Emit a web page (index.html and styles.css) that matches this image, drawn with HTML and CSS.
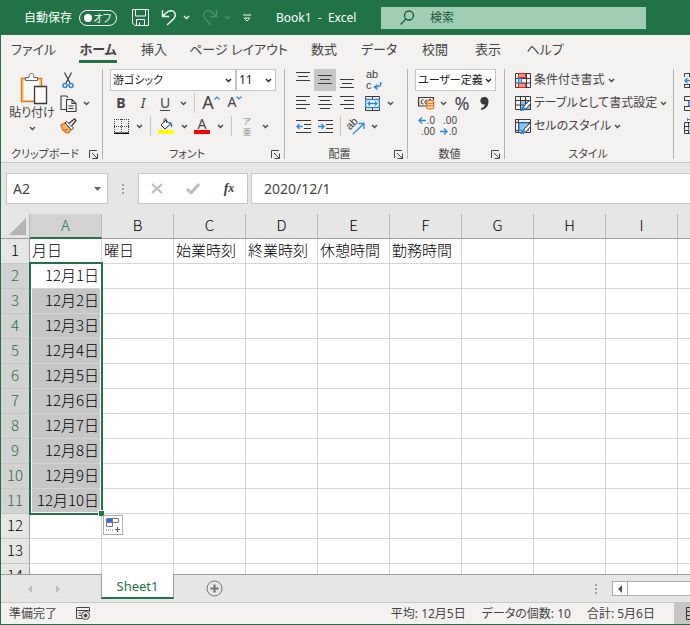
FILE: index.html
```
<!DOCTYPE html>
<html lang="ja">
<head>
    <meta charset="UTF-8">
    <title>Book1 - Excel</title>
    <link rel="stylesheet" href="styles.css">
</head>
<body>

    <svg class="defs" aria-hidden="true">
        <symbol id="chev" viewBox="0 0 7 5"><path d="M1 1l2.500 2.500L6 1" fill="none" stroke="currentColor" stroke-width="1.300"/></symbol>
        <symbol id="launch" viewBox="0 0 9 9"><path d="M.5 8V.5H8M3 3l5 5M8.500 3.500v5h-5" fill="none" stroke="currentColor"/></symbol>
    </svg>

    <header class="titlebar">
        <label class="autosave">自動保存
            <input type="checkbox" class="autosave__input">
            <span class="autosave__switch">オフ</span>
        </label>
        <div class="quick">
            <button class="quick__btn" aria-label="上書き保存">
                <svg width="17" height="17" viewBox="0 0 17 17" fill="none" stroke="#fff"><path d="M.5.5h16v16H3L.5 14zM3.500.5v6.500h10V.5M4.500 16.500v-6h8v6M7.500 16v-2.500"/></svg>
            </button>
            <button class="quick__btn quick__btn--wide" aria-label="元に戻す">
                <svg width="16" height="17" viewBox="0 0 16 17" fill="none" stroke="#fff" stroke-width="1.400"><path d="M1.500 1v6.500H8M1.500 7.500L5 4c3-3 7-3 8.500-.5 1.500 2.500 1 4.500-1 6.500L6 16"/></svg>
                <svg class="chev"><use href="#chev"/></svg>
            </button>
            <button class="quick__btn quick__btn--wide quick__btn--off" aria-label="やり直し">
                <svg width="16" height="17" viewBox="0 0 16 17" fill="none" stroke="currentColor" stroke-width="1.400"><path d="M14.500 1v6.500H8M14.500 7.500L11 4C8 1 4 1 2.500 3.500 1 6 1.500 8 3.500 10L9 16"/></svg>
                <svg class="chev"><use href="#chev"/></svg>
            </button>
            <button class="quick__btn" aria-label="カスタマイズ">
                <svg width="8" height="8" viewBox="0 0 8 8"><path d="M0 1h8" stroke="#fff"/><path d="M1 4h6L4 7z" fill="none" stroke="#fff"/></svg>
            </button>
        </div>
        <span class="titlebar__name">Book1&nbsp; -&nbsp; Excel</span>
        <label class="search">
            <svg width="15" height="15" viewBox="0 0 15 15" fill="none" stroke="#185c37" stroke-width="1.300"><circle cx="9" cy="5.500" r="4.500"/><path d="M6 9l-5.500 5.500"/></svg>
            <input type="text" class="search__input" placeholder="検索" aria-label="検索">
        </label>
    </header>

    <nav class="tabs">
        <a href="#">ファイル</a>
        <a href="#" class="is-active">ホーム</a>
        <a href="#">挿入</a>
        <a href="#">ページ レイアウト</a>
        <a href="#">数式</a>
        <a href="#">データ</a>
        <a href="#">校閲</a>
        <a href="#">表示</a>
        <a href="#">ヘルプ</a>
    </nav>

    <div class="ribbon">
        <section class="group group--clip">
            <div class="group__body group__body--clip">
                <button class="paste">
                    <svg width="28" height="32" viewBox="0 0 28 32"><path d="M1.500 5.500h20v23h-20z" fill="#f8d98c" stroke="#e07a1c" stroke-width="1.500"/><path d="M4 7h15v20H4z" fill="#fafafa"/><path d="M5.500 7.500v-3H9C9 1.500 10 .5 11.500.5S14 1.500 14 4.500h3.500v3z" fill="#fafafa" stroke="#666"/><path d="M14.500 13.500h12v17h-12z" fill="#fafafa" stroke="#3b3a39" stroke-width="1.300"/></svg>
                    <span>貼り付け</span>
                    <svg class="chev"><use href="#chev"/></svg>
                </button>
                <div class="rows">
                    <div class="row">
                        <button class="tool" aria-label="切り取り">
                            <svg width="12" height="17" viewBox="0 0 12 17" fill="none" stroke="#3b3a39" stroke-width="1.200"><path d="M2.500.5L8 11M9.500.5L4 11"/><g stroke="#2b88d8" stroke-width="1.500"><circle cx="3" cy="13.500" r="2"/><circle cx="9" cy="13.500" r="2"/></g></svg>
                        </button>
                    </div>
                    <div class="row">
                        <button class="tool" aria-label="コピー">
                            <svg width="17" height="17" viewBox="0 0 17 17" fill="none" stroke="#3b3a39" stroke-width="1.100"><path d="M6 14.500H1V1h5.500l1.500 1.500M6.500 4.500h5.500l4 4v8H6.500zM12 4.500v4h4M8.500 11h5M8.500 13.500h5"/></svg>
                        </button>
                        <button class="drop" aria-label="コピーのオプション"><svg class="chev"><use href="#chev"/></svg></button>
                    </div>
                    <div class="row">
                        <button class="tool" aria-label="書式のコピー">
                            <svg width="17" height="16" viewBox="0 0 17 16"><path d="M1 7l5-2.500 6 6L8.500 15 5 14l1.500-2L3 12.500z" fill="#f6b26b" stroke="#e07a1c" stroke-width="1.500"/><path d="M5 5l2-1.500 6.500 6.500-2 2z" fill="#fff" stroke="#3b3a39"/><path d="M9 5.500L14.500.8 16 2.500 11.500 8" fill="#fff" stroke="#3b3a39" stroke-width="1.300"/></svg>
                        </button>
                    </div>
                </div>
            </div>
            <div class="group__label">クリップボード<button class="launch" aria-label="クリップボードの設定"><svg><use href="#launch"/></svg></button></div>
        </section>

        <section class="group group--font">
            <div class="group__body rows">
                <div class="row">
                    <span class="combo combo--font"><select aria-label="フォント"><option>游ゴシック</option></select><svg class="chev"><use href="#chev"/></svg></span>
                    <span class="combo combo--size"><select aria-label="フォント サイズ"><option>11</option></select><svg class="chev"><use href="#chev"/></svg></span>
                </div>
                <div class="row">
                    <button class="tool tool--bold">B</button>
                    <button class="tool tool--italic">I</button>
                    <button class="tool tool--under">U</button>
                    <button class="drop" aria-label="下線の種類"><svg class="chev"><use href="#chev"/></svg></button>
                    <i class="split"></i>
                    <button class="tool tool--grow" aria-label="フォント サイズの拡大">A<svg width="6" height="4" viewBox="0 0 6 4"><path d="M.5 3.500L3 1l2.500 2.500" fill="none" stroke="#2b88d8" stroke-width="1.200"/></svg></button>
                    <button class="tool tool--shrink" aria-label="フォント サイズの縮小">A<svg width="6" height="4" viewBox="0 0 6 4"><path d="M.5.5L3 3 5.500.5" fill="none" stroke="#2b88d8" stroke-width="1.200"/></svg></button>
                </div>
                <div class="row">
                    <button class="tool" aria-label="罫線">
                        <svg width="15" height="15" viewBox="0 0 15 15" stroke="#3b3a39"><path d="M.5 0v13M7.500 0v13M14.500 0v13M0 .5h15M0 7.500h15" stroke-dasharray="1 1"/><path d="M0 14.500h15" stroke="#000" stroke-width="2"/></svg>
                    </button>
                    <button class="drop" aria-label="罫線の種類"><svg class="chev"><use href="#chev"/></svg></button>
                    <i class="split"></i>
                    <button class="tool" aria-label="塗りつぶしの色">
                        <svg width="16" height="16" viewBox="0 0 16 16"><path d="M3 7l5-5 4 4.500-5 4.500z" fill="#fff" stroke="#3b3a39"/><path d="M6 5V1.500Q7-.5 8.500 1.500V5" fill="none" stroke="#3b3a39"/><path d="M11 3.500q4 .5 3 6-2-1-1.500-3.500z" fill="#1f6fb5"/><path d="M0 12h16v4H0z" fill="#ff0"/></svg>
                    </button>
                    <button class="drop" aria-label="その他の塗りつぶし"><svg class="chev"><use href="#chev"/></svg></button>
                    <button class="tool tool--color">A</button>
                    <button class="drop" aria-label="その他のフォントの色"><svg class="chev"><use href="#chev"/></svg></button>
                    <i class="split"></i>
                    <button class="tool tool--ruby"><span>ア</span><span>亜</span></button>
                    <button class="drop" aria-label="ふりがなの設定"><svg class="chev"><use href="#chev"/></svg></button>
                </div>
            </div>
            <div class="group__label">フォント<button class="launch" aria-label="フォントの設定"><svg><use href="#launch"/></svg></button></div>
        </section>

        <section class="group group--align">
            <div class="group__body rows">
                <div class="row">
                    <button class="tool" aria-label="上揃え"><svg width="14" height="16" stroke="#3b3a39"><path d="M0 .5h14M2 4.500h10M0 8.500h14"/></svg></button>
                    <button class="tool is-pressed" aria-label="上下中央揃え"><svg width="14" height="16" stroke="#3b3a39"><path d="M0 3.500h14M2 7.500h10M0 11.500h14"/></svg></button>
                    <button class="tool" aria-label="下揃え"><svg width="14" height="16" stroke="#3b3a39"><path d="M0 7.500h14M2 11.500h10M0 15.500h14"/></svg></button>
                    <button class="tool tool--wrap" aria-label="折り返して全体を表示する">
                        <span>ab</span>
                        <span class="tool__line">c<svg width="9" height="8" viewBox="0 0 9 8" fill="none" stroke="#2b88d8" stroke-width="1.500"><path d="M7.500 0Q9 5 2 5M4.500 2.500L1.500 5l3 2.500"/></svg></span>
                    </button>
                </div>
                <div class="row">
                    <button class="tool" aria-label="左揃え"><svg width="14" height="14" stroke="#3b3a39"><path d="M0 .5h14M0 4.500h10M0 8.500h14M0 12.500h10"/></svg></button>
                    <button class="tool" aria-label="中央揃え"><svg width="14" height="14" stroke="#3b3a39"><path d="M0 .5h14M2 4.500h10M0 8.500h14M2 12.500h10"/></svg></button>
                    <button class="tool" aria-label="右揃え"><svg width="14" height="14" stroke="#3b3a39"><path d="M0 .5h14M4 4.500h10M0 8.500h14M4 12.500h10"/></svg></button>
                    <button class="tool tool--merge" aria-label="セルを結合して中央揃え">
                        <svg width="15" height="15" viewBox="0 0 15 15" fill="none"><path d="M.5.5h14v14H.5zM7.500.5v3M7.500 11.500v3" stroke="#3b3a39"/><path d="M.7 3.500h13.600v8H.7z" fill="#fff" stroke="#2b88d8" stroke-width="1.400"/><path d="M3 7.500h9M5 5.500l-2 2 2 2M10 5.500l2 2-2 2" stroke="#2b88d8" stroke-width="1.300"/></svg>
                    </button>
                    <button class="drop" aria-label="結合の種類"><svg class="chev"><use href="#chev"/></svg></button>
                </div>
                <div class="row">
                    <button class="tool" aria-label="インデントを減らす"><svg width="15" height="13" fill="none" stroke="#3b3a39"><path d="M0 .5h15M8 4.500h7M8 8.500h7M0 12.500h15"/><path d="M6.500 6.500H1M3.500 4L1 6.500 3.500 9" stroke="#2b88d8" stroke-width="1.300"/></svg></button>
                    <button class="tool" aria-label="インデントを増やす"><svg width="15" height="13" fill="none" stroke="#3b3a39"><path d="M0 .5h15M8 4.500h7M8 8.500h7M0 12.500h15"/><path d="M0 6.500h6M3.500 4L6 6.500 3.500 9" stroke="#2b88d8" stroke-width="1.300"/></svg></button>
                    <i class="split"></i>
                    <button class="tool tool--orient" aria-label="方向">
                        <svg width="17" height="17" viewBox="0 0 17 17" fill="none"><text x="0" y="10" font-size="11" fill="#3b3a39" transform="rotate(-45 4 9)">ab</text><path d="M5 16L15.500 6M10.500 5.500h5.500V11" stroke="#2b88d8" stroke-width="1.300"/></svg>
                    </button>
                    <button class="drop" aria-label="方向の種類"><svg class="chev"><use href="#chev"/></svg></button>
                </div>
            </div>
            <div class="group__label">配置<button class="launch" aria-label="配置の設定"><svg><use href="#launch"/></svg></button></div>
        </section>

        <section class="group group--number">
            <div class="group__body rows">
                <div class="row">
                    <span class="combo combo--format"><select aria-label="表示形式"><option>ユーザー定義</option></select><svg class="chev"><use href="#chev"/></svg></span>
                </div>
                <div class="row">
                    <button class="tool" aria-label="通貨表示形式">
                        <svg width="17" height="14" viewBox="0 0 17 14" fill="none"><path d="M8 10H.6V1.500h14.800V4" stroke="#3b3a39" stroke-width="1.200"/><path d="M5.500 3.500Q3 4 3 6t2.500 2M9 4Q7 4 7 6t1 2M11 3.500h2" stroke="#3b3a39"/><path d="M8.700 6v6q3.500 2 7 0V6" fill="#fbe3c8" stroke="#e07a1c" stroke-width="1.300"/><ellipse cx="12.200" cy="6" rx="3.500" ry="1.500" fill="#fff" stroke="#e07a1c" stroke-width="1.300"/><path d="M8.700 9q3.500 2 7 0" stroke="#e07a1c" stroke-width="1.300"/></svg>
                    </button>
                    <button class="drop drop--narrow" aria-label="通貨の種類"><svg class="chev"><use href="#chev"/></svg></button>
                    <button class="tool tool--percent">%</button>
                    <button class="tool" aria-label="桁区切りスタイル"><svg width="9" height="13" viewBox="0 0 9 13"><path d="M4 0a4 4 0 0 1 4.500 4.500C8.500 9 6 12 1 13V11.500Q4.500 10 5 7.500A3.800 3.800 0 1 1 4 0z" fill="#3b3a39"/></svg></button>
                </div>
                <div class="row">
                    <button class="tool tool--dec" aria-label="小数点以下の表示桁数を増やす">
                        <span class="tool__line"><svg width="8" height="7" fill="none" stroke="#2b88d8" stroke-width="1.300"><path d="M8 3.500H1M4 .5l-3 3 3 3"/></svg>.0</span>
                        <span>.00</span>
                    </button>
                    <button class="tool tool--dec" aria-label="小数点以下の表示桁数を減らす">
                        <span>.00</span>
                        <span class="tool__line"><svg width="8" height="7" fill="none" stroke="#2b88d8" stroke-width="1.300"><path d="M0 3.500h7M4 .5l3 3-3 3"/></svg>.0</span>
                    </button>
                </div>
            </div>
            <div class="group__label">数値<button class="launch" aria-label="表示形式の設定"><svg><use href="#launch"/></svg></button></div>
        </section>

        <section class="group group--style">
            <div class="group__body rows">
                <button class="row item">
                    <svg width="16" height="15" viewBox="0 0 16 15" fill="none"><path d="M.5.5h15v14H.5zM0 5.500h16M0 10h16M11.500 0v15" stroke="#3b3a39"/><path d="M3.500.5h7v4h-7zM3.500 10.500h7v4h-7z" fill="#f4918d" stroke="#d92b2b"/><path d="M3.500 5.500h3v4.500h-3z" fill="#8cc4f0" stroke="#2b88d8"/></svg>
                    条件付き書式<svg class="chev"><use href="#chev"/></svg>
                </button>
                <button class="row item">
                    <svg width="16" height="15" viewBox="0 0 16 15" fill="none"><path d="M5 5h10.500v9H5z" fill="#8cc4f0"/><path d="M.5.5h15v13H.5zM0 4.500h16M0 9h9M5.500 0v14M10.500 0v8" stroke="#3b3a39"/><path d="M15 4l-6 6-1 4 3-1 5-6z" fill="#fff" stroke="#3b3a39"/><path d="M8.500 10.500Q6 11 5 15q4 .5 6-2z" fill="#2b88d8"/></svg>
                    テーブルとして書式設定<svg class="chev"><use href="#chev"/></svg>
                </button>
                <button class="row item">
                    <svg width="16" height="15" viewBox="0 0 16 15" fill="none"><path d="M.5.5h15v13H.5zM0 3.500h16M3.500 0v14M0 11.500h6" stroke="#3b3a39"/><path d="M4 4h9.500v7.500H4z" fill="#8cc4f0" stroke="#2b88d8"/><path d="M15 4l-6 6-1 4 3-1 5-6z" fill="#fff" stroke="#3b3a39"/><path d="M8.500 10.500Q6 11 5 15q4 .5 6-2z" fill="#2b88d8"/></svg>
                    セルのスタイル<svg class="chev"><use href="#chev"/></svg>
                </button>
            </div>
            <div class="group__label">スタイル</div>
        </section>

        <section class="group group--cells">
            <div class="group__body rows">
                <button class="row item" aria-label="挿入"><svg width="16" height="15" viewBox="0 0 16 15" fill="none"><path d="M.5 4V.5h15v14H.5V11M5.500 0v4M5.500 11v4M0 11.500h16" stroke="#3b3a39"/><path d="M7 7.500H1M3.500 5L1 7.500 3.500 10" stroke="#2b88d8" stroke-width="1.300"/></svg></button>
                <button class="row item" aria-label="削除"><svg width="16" height="15" viewBox="0 0 16 15" fill="none"><path d="M.5 4V.5h15v14H.5V10M0 4.500h6M0 10.500h6" stroke="#3b3a39"/><path d="M4.500 5h9v5h-9z" fill="#8cc4f0" stroke="#2b88d8"/></svg></button>
                <button class="row item" aria-label="書式"><svg width="16" height="16" viewBox="0 0 16 16" fill="none"><path d="M.5 4.500h15v11H.5zM0 8.500h16M0 12.500h16M4.500 4v12" stroke="#3b3a39"/><path d="M3.500 0v3M3.500 1.500H14M4.500 8.500h8v4h-8z" stroke="#2b88d8"/></svg></button>
            </div>
        </section>
    </div>

    <div class="formula">
        <div class="namebox">
            <input type="text" value="A2" aria-label="名前ボックス">
            <button aria-label="名前の一覧"><svg width="7" height="4"><path d="M0 0h7L3.500 4z" fill="#666"/></svg></button>
        </div>
        <svg class="grip" width="2" height="12"><path d="M1 1v10" stroke="#a0a0a0" stroke-width="2" stroke-dasharray="2 2"/></svg>
        <div class="formula__btns">
            <button aria-label="キャンセル"><svg width="12" height="11"><path d="M1 1l10 9M11 1L1 10" stroke="#bcbcbc" stroke-width="2"/></svg></button>
            <button aria-label="入力"><svg width="14" height="11"><path d="M1 6l4 4 8-9" fill="none" stroke="#bcbcbc" stroke-width="3"/></svg></button>
            <button class="fx">f<small>x</small></button>
        </div>
        <input type="text" class="formula__input" value="2020/12/1" aria-label="数式バー">
    </div>

    <main class="sheet">
        <table>
            <thead>
                <tr><th class="corner"><svg width="17" height="17"><path d="M17 0v17H0z" fill="#b4b4b4"/></svg></th><th class="is-on">A</th><th>B</th><th>C</th><th>D</th><th>E</th><th>F</th><th>G</th><th>H</th><th>I</th><th></th></tr>
            </thead>
            <tbody>
                <tr><th>1</th><td>月日</td><td>曜日</td><td>始業時刻</td><td>終業時刻</td><td>休憩時間</td><td>勤務時間</td><td></td><td></td><td></td><td></td></tr>
                <tr class="is-on"><th>2</th><td class="is-first">12月1日<div class="selection"></div></td><td></td><td></td><td></td><td></td><td></td><td></td><td></td><td></td><td></td></tr>
                <tr class="is-on"><th>3</th><td>12月2日</td><td></td><td></td><td></td><td></td><td></td><td></td><td></td><td></td><td></td></tr>
                <tr class="is-on"><th>4</th><td>12月3日</td><td></td><td></td><td></td><td></td><td></td><td></td><td></td><td></td><td></td></tr>
                <tr class="is-on"><th>5</th><td>12月4日</td><td></td><td></td><td></td><td></td><td></td><td></td><td></td><td></td><td></td></tr>
                <tr class="is-on"><th>6</th><td>12月5日</td><td></td><td></td><td></td><td></td><td></td><td></td><td></td><td></td><td></td></tr>
                <tr class="is-on"><th>7</th><td>12月6日</td><td></td><td></td><td></td><td></td><td></td><td></td><td></td><td></td><td></td></tr>
                <tr class="is-on"><th>8</th><td>12月7日</td><td></td><td></td><td></td><td></td><td></td><td></td><td></td><td></td><td></td></tr>
                <tr class="is-on"><th>9</th><td>12月8日</td><td></td><td></td><td></td><td></td><td></td><td></td><td></td><td></td><td></td></tr>
                <tr class="is-on"><th>10</th><td>12月9日</td><td></td><td></td><td></td><td></td><td></td><td></td><td></td><td></td><td></td></tr>
                <tr class="is-on"><th>11</th><td>12月10日</td><td></td><td></td><td></td><td></td><td></td><td></td><td></td><td></td><td></td></tr>
                <tr><th>12</th><td></td><td class="has-fill"><button class="fill" aria-label="オートフィル オプション"><svg width="16" height="16" viewBox="0 0 16 16" fill="none" stroke="#777"><path d="M1.500 1.500h12v4h-12zM7.500 1.500v8h-6v-4"/><path d="M2 2h5v3H2z" fill="#2a6df5" stroke="none"/><path d="M1 13h7" stroke-dasharray="1 1"/><path d="M10 12.500h5M12.500 10v5" stroke="#555"/></svg></button></td><td></td><td></td><td></td><td></td><td></td><td></td><td></td><td></td></tr>
                <tr><th>13</th><td></td><td></td><td></td><td></td><td></td><td></td><td></td><td></td><td></td><td></td></tr>
                <tr><th>14</th><td></td><td></td><td></td><td></td><td></td><td></td><td></td><td></td><td></td><td></td></tr>
            </tbody>
        </table>
    </main>

    <div class="sheetbar">
        <div class="sheetbar__nav">
            <button aria-label="前のシート"><svg width="4" height="8"><path d="M4 0v8L0 4z" fill="#bbb"/></svg></button>
            <button aria-label="次のシート"><svg width="4" height="8"><path d="M0 0v8l4-4z" fill="#bbb"/></svg></button>
        </div>
        <button class="sheetbar__tab">Sheet1</button>
        <button class="sheetbar__add" aria-label="新しいシート"><svg width="17" height="17" fill="none" stroke="#707070"><circle cx="8.500" cy="8.500" r="7.500"/><path d="M4.500 8.500h8M8.500 4.500v8" stroke-width="2"/></svg></button>
        <svg class="grip" width="2" height="10"><path d="M1 0v10" stroke="#a0a0a0" stroke-width="2" stroke-dasharray="2 2"/></svg>
        <div class="scroll">
            <button aria-label="左へスクロール"><svg width="4" height="8"><path d="M4 0v8L0 4z" fill="#555"/></svg></button>
            <span class="scroll__thumb"></span>
        </div>
    </div>

    <footer class="status">
        <span>準備完了</span>
        <button aria-label="マクロの記録"><svg width="15" height="13" fill="none" stroke="#444"><path d="M6 11.500H.5V.5h13V5M.5 3.500h13M2.500 6h3M2.500 8.500h3" /><circle cx="9.500" cy="8.500" r="4"/><circle cx="9.500" cy="8.500" r="1.500" fill="#444"/></svg></button>
        <div class="status__sums">
            <span>平均: 12月5日</span>
            <span>データの個数: 10</span>
            <span>合計: 5月6日</span>
        </div>
        <button class="status__view" aria-label="標準"><svg width="15" height="13" fill="none" stroke="#333"><path d="M.5.5h14v12H.5zM0 4.500h15M0 8.500h15M5.500 0v13M10.500 0v13"/></svg></button>
    </footer>

</body>
</html>
```

FILE: styles.css
```
*,
*::before,
*::after {
  box-sizing: border-box;
}

:root {
  --green: #217346;
  --panel: #f3f2f1;
  --line: #c8c6c4;
  --ink: #444;
}

body {
  margin: 0;
  height: 100vh;
  display: flex;
  flex-direction: column;
  overflow: hidden;
  border-left: 1px solid var(--green);
  border-bottom: 1px solid var(--green);
  background-color: #e6e6e6;
  color: var(--ink);
  font-family: "Noto Sans", "Noto Sans CJK JP", sans-serif;
  font-size: 12px;
  line-height: 16px;
  font-feature-settings: "palt";
}

/* form items */

button,
input,
select {
  margin: 0;
  padding: 0;
  border: 0;
  border-radius: 0;
  background-color: transparent;
  color: inherit;
  font: inherit;
  font-feature-settings: inherit;
  appearance: none;
  outline: none;
}

button {
  display: flex;
  align-items: center;
  justify-content: center;
}

a {
  color: inherit;
  text-decoration: none;
}

svg {
  display: block;
  flex: none;
}

.defs {
  position: absolute;
  width: 0;
  height: 0;
}

.chev {
  width: 7px;
  height: 5px;
}

/* title bar */

.titlebar {
  flex: none;
  height: 35px;
  display: flex;
  align-items: center;
  padding-left: 23px;
  background-color: var(--green);
  color: #fff;
}

.autosave {
  display: flex;
  align-items: center;
  gap: 7px;
}

.autosave__input {
  position: absolute;
  opacity: 0;
}

.autosave__switch {
  display: flex;
  align-items: center;
  justify-content: space-between;
  width: 38px;
  height: 16px;
  padding: 0 5px 0 4px;
  border: 1px solid #fff;
  border-radius: 8px;
  font-size: 10px;
  line-height: 14px;
}

.autosave__switch::before {
  content: "";
  width: 8px;
  height: 8px;
  border-radius: 50%;
  background-color: #fff;
}

.quick {
  display: flex;
  align-items: center;
  gap: 12px;
  margin-left: 15px;
}

.quick__btn--wide {
  gap: 6px;
}

.quick__btn--off {
  color: #4c9069;
}

.titlebar__name {
  margin-left: 25px;
  width: 105px;
  white-space: nowrap;
}

.search {
  display: flex;
  align-items: center;
  gap: 15px;
  width: 265px;
  height: 22px;
  padding-left: 19px;
  background-color: #a0cdb4;
  color: #185c37;
}

.search__input {
  flex: 1;
  min-width: 0;
}

.search__input::placeholder {
  color: #185c37;
}

/* ribbon tabs */

.tabs {
  flex: none;
  display: grid;
  grid-template-columns: 65px 64px 48px 121px 50px 60px 52px 54px 60px;
  align-items: start;
  height: 29px;
  padding-top: 3px;
  background-color: var(--panel);
  font-size: 13px;
  line-height: 22px;
  text-align: center;
  white-space: nowrap;
}

.tabs .is-active {
  justify-self: center;
  border-bottom: 3px solid var(--green);
  font-weight: 700;
}

/* ribbon */

.ribbon {
  flex: none;
  display: flex;
  height: 99px;
  padding-top: 5px;
  overflow: hidden;
  border-bottom: 1px solid var(--line);
  background-color: var(--panel);
}

.group {
  flex: none;
  display: flex;
  flex-direction: column;
  justify-content: space-between;
  height: 90px;
  padding-left: 7px;
  border-right: 1px solid #b3b0ad;
}

.group--clip { width: 102px; }
.group--font { width: 182px; }
.group--align { width: 123px; }
.group--number { width: 97px; }
.group--style { width: 169px; }
.group--cells { border-right: 0; }

.group--style,
.group--cells {
  padding-left: 10px;
}

.group__body--clip {
  display: flex;
  gap: 1px;
}

.group__label {
  display: flex;
  justify-content: center;
  height: 14px;
  padding-right: 20px;
  position: relative;
  font-size: 11px;
  line-height: 18px;
  white-space: nowrap;
}

.group--style .group__label {
  padding-right: 12px;
}

.launch {
  position: absolute;
  right: 4px;
  bottom: 0;
}

.launch svg {
  width: 9px;
  height: 9px;
}

.paste {
  flex-direction: column;
  justify-content: flex-start;
  width: 48px;
  padding-top: 4px;
  white-space: nowrap;
}

.paste svg:first-child {
  margin-left: 4px;
}

.paste .chev {
  margin-top: 5px;
}

.rows {
  display: flex;
  flex-direction: column;
  gap: 1px;
}

.row {
  display: flex;
  align-items: center;
  height: 22px;
}

.tool {
  width: 22px;
  height: 22px;
  font-size: 14px;
}

.tool__line {
  display: flex;
  align-items: center;
  gap: 1px;
}

.tool.is-pressed {
  background-color: #c8c6c4;
}

.drop {
  width: 14px;
  height: 22px;
}

.drop--narrow {
  width: 12px;
  margin-right: 2px;
}

.split {
  width: 1px;
  height: 20px;
  margin: 0 4px;
  background-color: var(--line);
}

.tool--bold { font-weight: 700; }
.tool--italic { font-style: italic; }
.tool--under { text-decoration: underline; text-underline-offset: 2px; }

.tool--grow,
.tool--shrink {
  align-items: flex-start;
  width: 24px;
  line-height: 20px;
}

.tool--grow { font-size: 18px; }
.tool--shrink { font-size: 14px; }

.tool--grow svg,
.tool--shrink svg {
  margin-top: 4px;
}

.tool--color {
  width: 16px;
  height: 16px;
  margin: 0 3px;
  border-bottom: 4px solid #f00;
  line-height: 12px;
}

.tool--ruby {
  flex-direction: column;
  color: #8a8886;
  font-size: 8px;
  line-height: 11px;
}

.tool--wrap {
  flex-direction: column;
  align-items: flex-start;
  margin-left: 4px;
  padding-left: 4px;
  font-family: "Liberation Sans", sans-serif;
  font-size: 11px;
  line-height: 11px;
}

.tool--merge {
  margin-left: 3px;
}

.tool--orient {
  font-family: "Liberation Sans", sans-serif;
}

.tool--orient svg {
  overflow: visible;
}

.tool--percent {
  font-size: 18px;
}

.tool--dec {
  flex-direction: column;
  align-items: flex-end;
  padding-right: 2px;
  font-family: "Liberation Sans", sans-serif;
  font-size: 10px;
  line-height: 11px;
  white-space: nowrap;
}

.combo {
  position: relative;
  display: flex;
  height: 22px;
  border: 1px solid var(--line);
  background-color: #fff;
  color: #222;
}

.combo--font,
.combo--format {
  font-size: 11px;
}

.combo--font { width: 126px; }
.combo--size { width: 40px; }
.combo--format { width: 81px; }

.combo select {
  flex: 1;
  min-width: 0;
  padding-left: 2px;
}

.combo .chev {
  position: absolute;
  top: 8px;
  right: 3px;
}

.item {
  gap: 3px;
  justify-content: flex-start;
  white-space: nowrap;
}

/* formula bar */

.formula {
  flex: none;
  display: flex;
  align-items: center;
  height: 51px;
  padding-left: 5px;
}

.namebox,
.formula__btns,
.formula__input {
  height: 31px;
  border: 1px solid var(--line);
  background-color: #fff;
}

.namebox {
  display: flex;
  width: 102px;
  padding: 0 6px;
  font-size: 14px;
}

.namebox input {
  flex: 1;
  min-width: 0;
}

.formula .grip {
  margin: 0 14px;
}

.formula__btns {
  display: flex;
  width: 110px;
  margin-right: 3px;
}

.formula__btns button {
  flex: 1;
}

.formula__btns .fx {
  font: italic 700 14px "Liberation Serif", serif;
}

.fx small {
  font-size: 12px;
}

.formula__input {
  flex: 1;
  min-width: 0;
  border-right: 0;
  padding-left: 12px;
  font-size: 14px;
}

/* grid */

.sheet {
  flex: 1;
  min-height: 0;
  overflow: hidden;
  background-color: #fff;
  color: #000;
}

.sheet table {
  width: 749px;
  table-layout: fixed;
  border-collapse: separate;
  border-spacing: 0;
  font-family: "Noto Sans CJK JP", sans-serif;
  font-size: 15px;
  font-weight: 300;
  font-feature-settings: normal;
  line-height: 22px;
}

.sheet th,
.sheet td {
  height: 25px;
  padding: 0 2px;
  border-right: 1px solid #d4d4d4;
  border-bottom: 1px solid #d4d4d4;
  vertical-align: top;
  white-space: nowrap;
}

.sheet th {
  padding: 0;
  border-color: #9b9b9b;
  background-color: #e6e6e6;
  font-weight: 300;
}

.sheet thead th {
  border-right-color: #b8b8b8;
}

.sheet tbody th {
  border-bottom-color: #c6c6c6;
}

.sheet th.corner {
  width: 29px;
}

.corner svg {
  margin: 4px 0 0 8px;
}

.sheet thead .is-on,
.sheet .is-on th {
  background-color: #d2d2d2;
  color: var(--green);
}

.sheet thead .is-on {
  border-bottom: 2px solid var(--green);
}

.is-on td:nth-child(2) {
  background-color: #c6c6c6;
  text-align: right;
}

.is-on td.is-first {
  position: relative;
  background-color: #fff;
}

.selection {
  position: absolute;
  top: -2px;
  left: -1px;
  width: 74px;
  height: 253px;
  border: 2px solid var(--green);
  box-shadow: inset 0 0 0 1px #fff;
}

.selection::after {
  content: "";
  position: absolute;
  right: -3px;
  bottom: -3px;
  width: 6px;
  height: 6px;
  border-top: 1px solid #fff;
  border-left: 1px solid #fff;
  background-color: var(--green);
}

.has-fill {
  position: relative;
}

.fill {
  position: absolute;
  top: 1px;
  left: 1px;
  width: 20px;
  height: 20px;
  border: 1px solid #ababab;
  background-color: #fff;
}

/* sheet tabs */

.sheetbar {
  flex: none;
  display: flex;
  align-items: center;
  height: 28px;
  border-top: 1px solid #9b9b9b;
}

.sheetbar__nav {
  display: flex;
  justify-content: center;
  gap: 24px;
  width: 100px;
  padding-right: 14px;
}

.sheetbar__tab {
  align-self: flex-start;
  width: 73px;
  height: 25px;
  margin-top: -1px;
  border-right: 1px solid #9b9b9b;
  border-left: 1px solid #9b9b9b;
  border-bottom: 2px solid var(--green);
  background-color: #fff;
  color: var(--green);
  font-size: 13px;
}

.sheetbar__add {
  margin-left: 32px;
  margin-right: auto;
}

.scroll {
  display: flex;
  width: 78px;
  height: 15px;
  margin-left: 15px;
  border: 1px solid #ababab;
  border-right: 0;
  background-color: #fff;
}

.scroll button {
  width: 15px;
  border-right: 1px solid #ababab;
}

.scroll__thumb {
  flex: 1;
}

/* status bar */

.status {
  flex: none;
  display: flex;
  align-items: center;
  gap: 19px;
  height: 22px;
  padding-left: 8px;
  border-top: 1px solid var(--line);
  background-color: var(--panel);
  white-space: nowrap;
}

.status__sums {
  display: flex;
  gap: 16px;
  margin-left: auto;
}

.status__view {
  align-self: stretch;
  width: 16px;
  justify-content: flex-start;
  padding-left: 12px;
  overflow: hidden;
  background-color: #c8c6c4;
}
```
